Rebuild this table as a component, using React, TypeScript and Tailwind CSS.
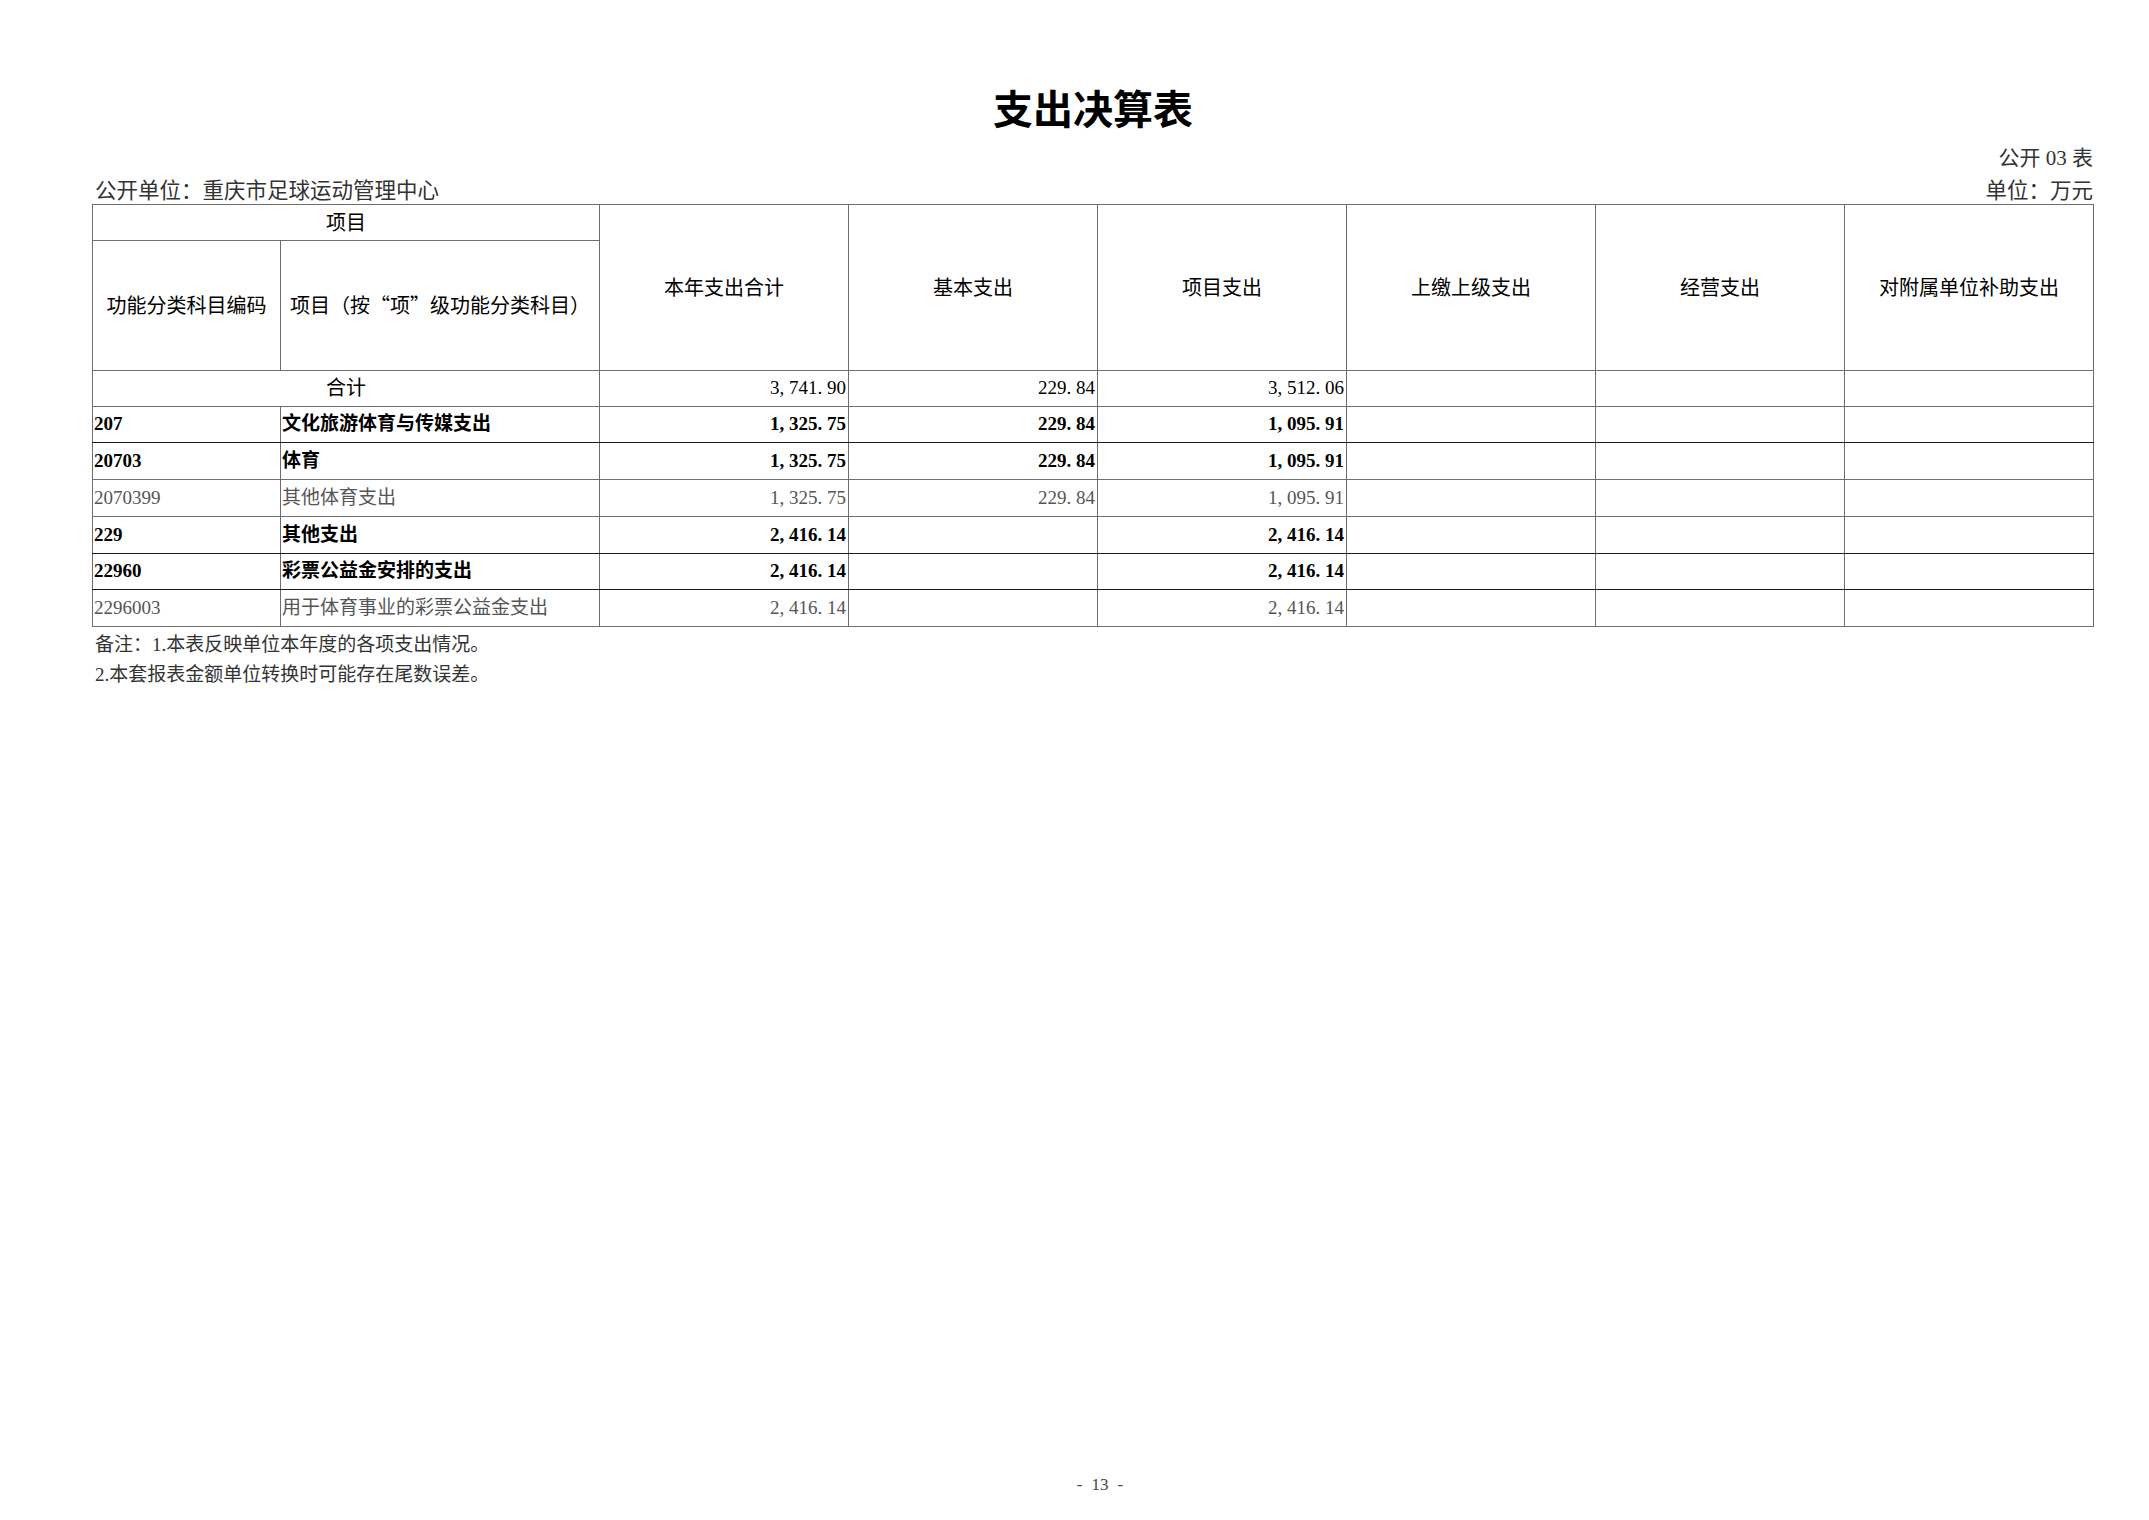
import React from "react";

type Row = {
  code: string;
  name: string;
  vals: string[];
  bold: boolean;
  darkBottom: boolean;
};

const rows: Row[] = [
  { code: "207", name: "文化旅游体育与传媒支出", vals: ["1,325.75", "229.84", "1,095.91", "", "", ""], bold: true, darkBottom: true },
  { code: "20703", name: "体育", vals: ["1,325.75", "229.84", "1,095.91", "", "", ""], bold: true, darkBottom: false },
  { code: "2070399", name: "其他体育支出", vals: ["1,325.75", "229.84", "1,095.91", "", "", ""], bold: false, darkBottom: false },
  { code: "229", name: "其他支出", vals: ["2,416.14", "", "2,416.14", "", "", ""], bold: true, darkBottom: true },
  { code: "22960", name: "彩票公益金安排的支出", vals: ["2,416.14", "", "2,416.14", "", "", ""], bold: true, darkBottom: true },
  { code: "2296003", name: "用于体育事业的彩票公益金支出", vals: ["2,416.14", "", "2,416.14", "", "", ""], bold: false, darkBottom: false },
];

const headers = ["本年支出合计", "基本支出", "项目支出", "上缴上级支出", "经营支出", "对附属单位补助支出"];

function Num({ v }: { v: string }) {
  return (
    <>
      {v.split("").map((c, i) =>
        c === "," || c === "." ? (
          <span key={i} className="inline-block w-[0.5em] text-left">
            {c}
          </span>
        ) : (
          <span key={i}>{c}</span>
        )
      )}
    </>
  );
}

export default function App() {
  return (
    <div className="w-[2149px] h-[1520px] bg-white flex flex-col font-['Liberation_Serif','Noto_Sans_CJK_SC',serif] text-[#222]">
      <div className="ml-[92px] w-[2002px] flex flex-col">
        <div className="mt-[87px] h-[48px] leading-[48px] text-center text-[40px] font-bold text-black">
          支出决算表
        </div>
        <div className="mt-[9px] h-[28px] leading-[28px] text-right text-[21px] text-[#333] pr-[1px]">
          公开 03 表
        </div>
        <div className="mt-[6px] h-[26px] leading-[26px] flex justify-between text-[21.5px] text-[#333]">
          <span className="pl-[3px]">公开单位：重庆市足球运动管理中心</span>
          <span className="pr-[1px]">单位：万元</span>
        </div>
        <table className="w-[2002px] table-fixed border-collapse">
          <colgroup>
            <col className="w-[188px]" />
            <col className="w-[319px]" />
            <col className="w-[249px]" />
            <col className="w-[249px]" />
            <col className="w-[249px]" />
            <col className="w-[249px]" />
            <col className="w-[249px]" />
            <col className="w-[249px]" />
          </colgroup>
          <thead>
            <tr className="h-[36px]">
              <th colSpan={2} className="border border-[#6e6e6e] text-[20px] font-normal text-black text-center align-middle">
                项目
              </th>
              {headers.map((h) => (
                <th key={h} rowSpan={2} className="border border-[#6e6e6e] text-[20px] font-normal text-black text-center align-middle">
                  {h}
                </th>
              ))}
            </tr>
            <tr className="h-[130px]">
              <th className="border border-[#6e6e6e] text-[20px] font-normal text-black text-center align-middle">
                功能分类科目编码
              </th>
              <th className="border border-[#6e6e6e] text-[20px] font-normal text-black text-center align-middle whitespace-nowrap">
                项目（按<span className="font-['Noto_Sans_CJK_SC',sans-serif]">“</span>项<span className="font-['Noto_Sans_CJK_SC',sans-serif]">”</span>级功能分类科目）
              </th>
            </tr>
          </thead>
          <tbody>
            <tr className="h-[35.5px]">
              <td colSpan={2} className="border border-[#6e6e6e] text-[20px] text-black text-center align-middle">
                合计
              </td>
              {["3,741.90", "229.84", "3,512.06", "", "", ""].map((v, i) => (
                <td key={i} className="border border-[#6e6e6e] text-[19px] text-black text-right align-middle pr-[2px] whitespace-nowrap">
                  <Num v={v} />
                </td>
              ))}
            </tr>
            {rows.map((r) => {
              const tone = r.bold ? "font-bold text-black" : "font-normal text-[#555]";
              const bc = r.darkBottom
                ? "border border-[#6e6e6e] border-b-[#1a1a1a]"
                : "border border-[#6e6e6e]";
              return (
                <tr key={r.code} className="h-[36.8px]">
                  <td className={`${bc} ${tone} text-[19px] text-left align-middle pl-[1px] whitespace-nowrap`}>
                    {r.code}
                  </td>
                  <td className={`${bc} ${tone} text-[19px] text-left align-middle pl-[1px] whitespace-nowrap`}>
                    {r.name}
                  </td>
                  {r.vals.map((v, i) => (
                    <td key={i} className={`${bc} ${tone} text-[19px] text-right align-middle pr-[2px] whitespace-nowrap`}>
                      <Num v={v} />
                    </td>
                  ))}
                </tr>
              );
            })}
          </tbody>
        </table>
        <div className="mt-[3px] pl-[3px] text-[19px] text-[#333]">
          <div className="h-[30px] leading-[30px]">备注：1.本表反映单位本年度的各项支出情况。</div>
          <div className="h-[30px] leading-[30px]">2.本套报表金额单位转换时可能存在尾数误差。</div>
        </div>
      </div>
      <div className="flex-1" />
      <div className="ml-[92px] w-[2002px] pl-[14px] h-[24px] mb-[23px] flex justify-center items-center gap-[9px] text-[17px] text-[#444]">
        <span>-</span>
        <span>13</span>
        <span>-</span>
      </div>
    </div>
  );
}
